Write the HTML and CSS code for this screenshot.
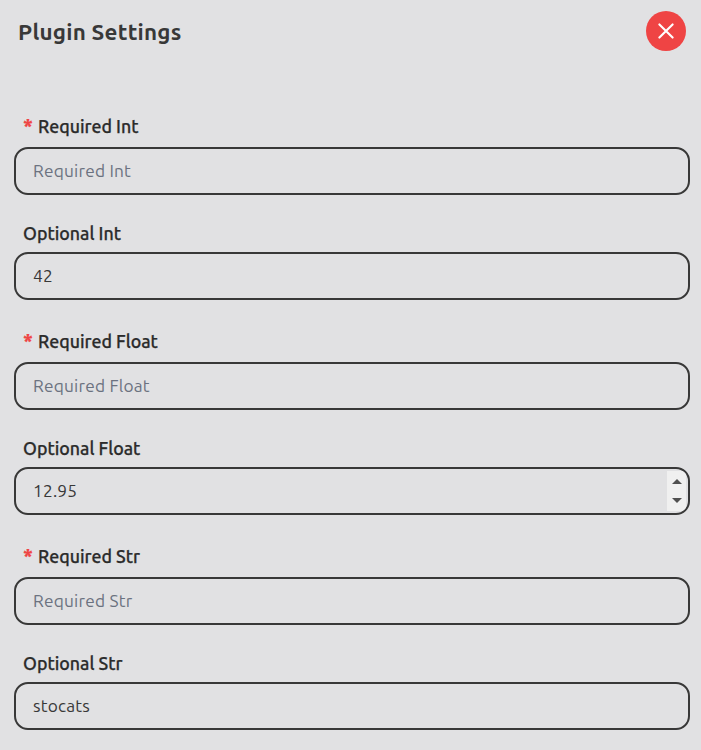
FILE: index.html
```html
<!DOCTYPE html>
<html lang="en">
<head>
<meta charset="utf-8">
<title>Plugin Settings</title>
<link rel="stylesheet" href="styles.css">
</head>
<body>
<main class="panel">
  <header class="header">
    <h1 class="title">Plugin Settings</h1>
    <button class="close" type="button" aria-label="Close">
      <svg width="16" height="16" viewBox="0 0 16 16" fill="none" stroke="#fff" stroke-width="2.1" stroke-linecap="round"><path d="M1.4 1.4 14.6 14.6M14.6 1.4 1.4 14.6"/></svg>
    </button>
  </header>
  <form class="form">
    <div class="field required">
      <label class="label" for="rint"><span class="star">*</span>Required Int</label>
      <div class="box"><input class="input" id="rint" placeholder="Required Int"></div>
    </div>
    <div class="field">
      <label class="label" for="oint">Optional Int</label>
      <div class="box"><input class="input" id="oint" value="42"></div>
    </div>
    <div class="field required">
      <label class="label" for="rfloat"><span class="star">*</span>Required Float</label>
      <div class="box"><input class="input" id="rfloat" placeholder="Required Float"></div>
    </div>
    <div class="field">
      <label class="label" for="ofloat">Optional Float</label>
      <div class="box"><input class="input" id="ofloat" value="12.95">
        <div class="spinner">
          <svg width="10" height="5" viewBox="0 0 10 5"><path d="M0 5 5 0 10 5Z" fill="#505050"/></svg>
          <svg width="10" height="5" viewBox="0 0 10 5"><path d="M0 0 5 5 10 0Z" fill="#505050"/></svg>
        </div>
      </div>
    </div>
    <div class="field required">
      <label class="label" for="rstr"><span class="star">*</span>Required Str</label>
      <div class="box"><input class="input" id="rstr" placeholder="Required Str"></div>
    </div>
    <div class="field">
      <label class="label" for="ostr">Optional Str</label>
      <div class="box"><input class="input" id="ostr" value="stocats"></div>
    </div>
  </form>
</main>
</body>
</html>
```
FILE: styles.css
```css
* { box-sizing: border-box; }
body {
  margin: 0;
  background: #e1e1e3;
  color: #383838;
  font-family: Ubuntu, "Noto Sans", sans-serif;
}
.panel { height: 750px; padding: 11px 11px 0 14px; overflow: hidden; }
.header {
  display: flex;
  justify-content: space-between;
  height: 94px;
  padding: 0 4px;
}
.title { margin: 5px 0 0; font-size: 22.4px; line-height: 32px; font-weight: 700; letter-spacing: 0.25px; }
.close {
  display: grid;
  place-items: center;
  width: 40px;
  height: 40px;
  padding: 0;
  border: 0;
  border-radius: 50%;
  background: #ef4444;
}
.field { display: flex; flex-direction: column; height: 105px; padding-top: 24px; }
.required { height: 110px; }
.required:first-child { height: 90px; padding-top: 4px; }
.required .label { height: 38px; line-height: 34px; }
.label {
  flex: none;
  height: 33px;
  padding-left: 9px;
  font-size: 17.8px;
  line-height: 28px;
  font-weight: 500;
  color: #2b2b2b;
  white-space: nowrap;
  -webkit-text-stroke: 0.25px currentColor;
}
.star { display: inline-block; width: 15px; color: #ef4444; font-size: 20px; font-weight: 700; line-height: 20px; }
.box {
  display: flex;
  align-items: center;
  height: 48px;
  padding-left: 17px;
  border: 2px solid #383838;
  border-radius: 14px;
  overflow: hidden;
}
.input {
  flex: 1;
  min-width: 0;
  height: 44px;
  padding: 0 0 2px;
  border: 0;
  outline: 0;
  background: transparent;
  color: #383838;
  font: 400 17.3px/24px Ubuntu, "Noto Sans", sans-serif;
  letter-spacing: 0.2px;
}
.input::placeholder { color: #6b7280; opacity: 1; }
.spinner {
  display: flex;
  flex-direction: column;
  align-items: center;
  justify-content: space-between;
  width: 19px;
  height: 40px;
  margin-right: 2px;
  padding: 8px 0;
  background: #f0f0f0;
}
```
